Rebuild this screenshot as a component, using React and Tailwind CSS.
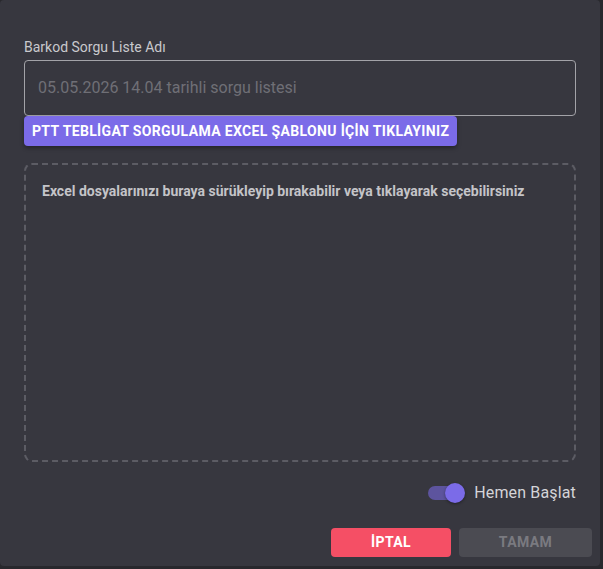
import React, { useState } from 'react';

const font = { fontFamily: 'Roboto, "Noto Sans", sans-serif' };

const Toggle = ({ checked, onChange }) => (
    <button
        type="button"
        onClick={() => onChange(!checked)}
        className="relative w-[37px] h-[20px] flex items-center"
    >
        <span className={`absolute left-0 w-[35px] h-[14px] rounded-full ${checked ? 'bg-[#5d549e]' : 'bg-[#6b6b72]'}`} />
        <span
            className={`absolute w-[20px] h-[20px] rounded-full shadow-[0_1px_3px_rgba(0,0,0,0.4)] ${checked ? 'left-[17px] bg-[#7b6be8]' : 'left-0 bg-[#d9d9dd]'}`}
        />
    </button>
);

const App = () => {
    const [startNow, setStartNow] = useState(true);

    return (
        <div className="w-[603px] h-[569px] bg-[#28282d]" style={font}>
            <div className="w-[600px] h-[566px] bg-[#37373f] rounded-[4px] flex flex-col">
                {/* form body */}
                <div className="flex flex-col px-6 pt-[39px]">
                    <label className="text-[14px] leading-[17px] text-[#c9c9cd] mb-[4px]">Barkod Sorgu Liste Adı</label>
                    <div className="h-[56px] border border-[#a3a3a8] rounded-[4px] flex items-center px-[13px]">
                        <input
                            className="w-full bg-transparent outline-none text-[16px] text-[#e0e0e0] placeholder:text-[#6f6f76]"
                            placeholder="05.05.2026 14.04 tarihli sorgu listesi"
                        />
                    </div>
                    <div className="flex">
                        <button className="h-[30px] px-2 bg-[#7b6be8] text-white text-[14px] font-bold tracking-[0.35px] rounded-[4px] shadow-[0_2px_4px_rgba(0,0,0,0.35)]">
                            PTT TEBLİGAT SORGULAMA EXCEL ŞABLONU İÇİN TIKLAYINIZ
                        </button>
                    </div>

                    {/* drop area */}
                    <div className="mt-[17px] h-[299px] border-2 border-dashed border-[#5c5c64] rounded-[8px] px-4 pt-[16px]">
                        <p className="text-[14px] leading-[20px] font-bold text-[#c4c4c8]">
                            Excel dosyalarınızı buraya sürükleyip bırakabilir veya tıklayarak seçebilirsiniz
                        </p>
                    </div>

                    <div className="mt-[19px] h-[24px] flex items-center justify-end gap-[9px]">
                        <Toggle checked={startNow} onChange={setStartNow} />
                        <span className="text-[16px] tracking-[0.15px] text-[#d4d4d8]">Hemen Başlat</span>
                    </div>
                </div>

                {/* footer */}
                <div className="mt-[23px] flex justify-end gap-[8px] pr-2">
                    <button className="w-[120px] h-[29px] rounded-[4px] bg-[#f54f65] text-white text-[14px] font-bold tracking-[0.4px]">
                        İPTAL
                    </button>
                    <button disabled className="w-[133px] h-[29px] rounded-[4px] bg-[#4b4b52] text-[#7a7a80] text-[14px] font-bold tracking-[0.4px]">
                        TAMAM
                    </button>
                </div>
            </div>
        </div>
    );
};

export default App;
